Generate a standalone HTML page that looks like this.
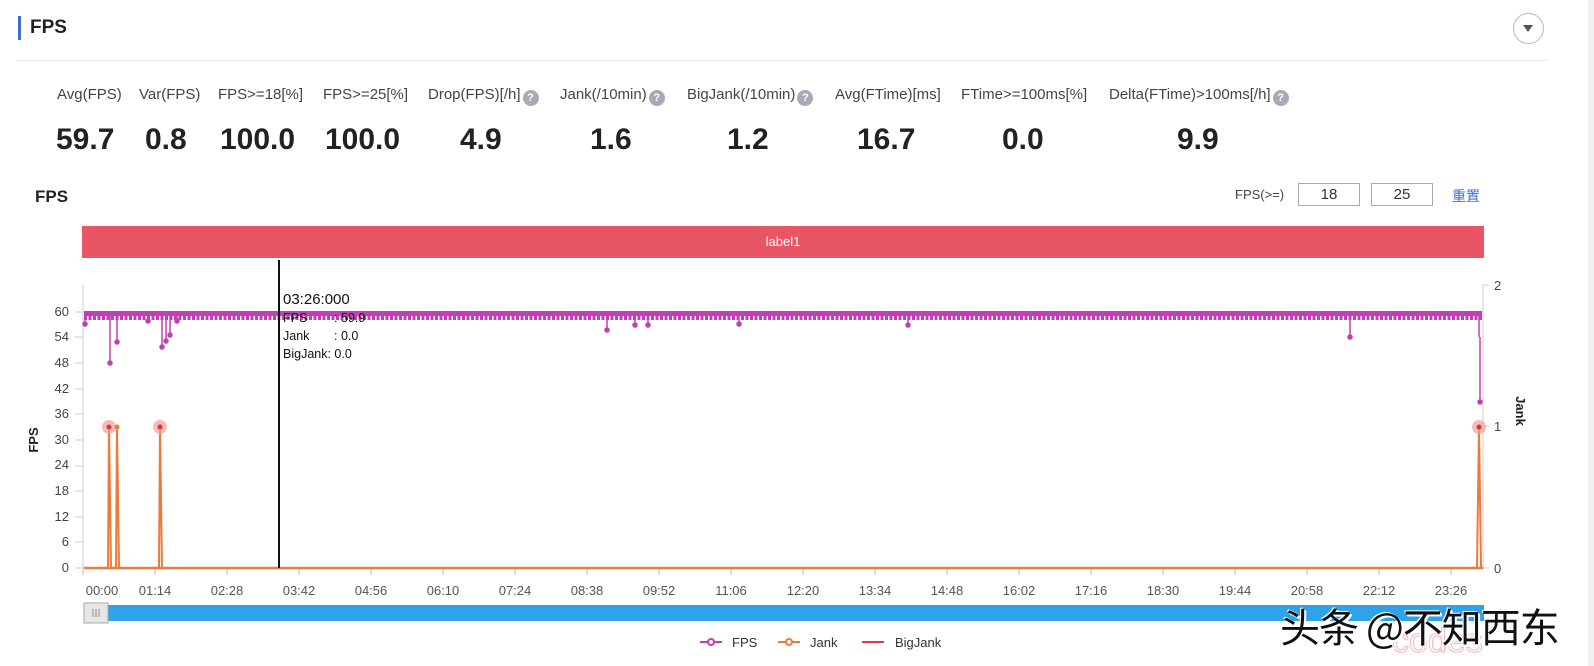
<!DOCTYPE html>
<html><head><meta charset="utf-8"><style>
body{margin:0;width:1594px;height:666px;background:#fff;font-family:"Liberation Sans","Noto Sans CJK SC",sans-serif;position:relative;overflow:hidden;color:#333}
.a{position:absolute;white-space:nowrap}
.lb{font-size:15px;color:#444;top:86px}
.v{font-size:30px;font-weight:bold;color:#222;top:123px}
.q{display:inline-block;width:16px;height:16px;border-radius:50%;background:#a9a9b8;color:#fff;font-size:11px;text-align:center;line-height:16px;font-weight:bold;vertical-align:-2px;margin-left:2px}
</style></head><body>
<div class="a" style="left:18px;top:16px;width:3px;height:24px;background:#3b6fd4"></div>
<div class="a" style="left:30px;top:17px;font-size:19px;font-weight:bold;color:#222">FPS</div>
<div class="a" style="left:1513px;top:13px;width:31px;height:31px;border:1px solid #bbb;border-radius:50%;box-sizing:border-box"></div>
<div class="a" style="left:1523px;top:25px;width:0;height:0;border-left:5px solid transparent;border-right:5px solid transparent;border-top:7px solid #555"></div>
<div class="a" style="left:16px;top:60px;width:1532px;height:1px;background:#e8e8e8"></div>
<div class="a" style="left:1588px;top:0;width:6px;height:666px;background:#f0f0f3"></div>

<div class="a lb" style="left:57px">Avg(FPS)</div>
<div class="a lb" style="left:139px">Var(FPS)</div>
<div class="a lb" style="left:218px">FPS&gt;=18[%]</div>
<div class="a lb" style="left:323px">FPS&gt;=25[%]</div>
<div class="a lb" style="left:428px">Drop(FPS)[/h]<span class="q">?</span></div>
<div class="a lb" style="left:560px">Jank(/10min)<span class="q">?</span></div>
<div class="a lb" style="left:687px">BigJank(/10min)<span class="q">?</span></div>
<div class="a lb" style="left:835px">Avg(FTime)[ms]</div>
<div class="a lb" style="left:961px">FTime&gt;=100ms[%]</div>
<div class="a lb" style="left:1109px">Delta(FTime)&gt;100ms[/h]<span class="q">?</span></div>

<div class="a v" style="left:56px">59.7</div>
<div class="a v" style="left:145px">0.8</div>
<div class="a v" style="left:220px">100.0</div>
<div class="a v" style="left:325px">100.0</div>
<div class="a v" style="left:460px">4.9</div>
<div class="a v" style="left:590px">1.6</div>
<div class="a v" style="left:727px">1.2</div>
<div class="a v" style="left:857px">16.7</div>
<div class="a v" style="left:1002px">0.0</div>
<div class="a v" style="left:1177px">9.9</div>

<div class="a" style="left:35px;top:187px;font-size:17px;font-weight:bold;color:#222">FPS</div>
<div class="a" style="left:1235px;top:187px;font-size:13px;color:#444">FPS(&gt;=)</div>
<div class="a" style="left:1298px;top:183px;width:62px;height:23px;border:1px solid #aaa;box-sizing:border-box;text-align:center;font-size:15px;line-height:21px">18</div>
<div class="a" style="left:1371px;top:183px;width:62px;height:23px;border:1px solid #aaa;box-sizing:border-box;text-align:center;font-size:15px;line-height:21px">25</div>
<div class="a" style="left:1452px;top:186px;font-size:14px;color:#3b6fd4">重置</div>

<div class="a" style="left:82px;top:226px;width:1402px;height:32px;background:#e85565;color:#fff;font-size:13px;text-align:center;line-height:32px">label1</div>

<svg class="a" style="left:0;top:0" width="1594" height="666" font-family="Liberation Sans, sans-serif">
<g stroke="#ccc" stroke-width="1">
<line x1="83" y1="285" x2="83" y2="569"/><line x1="1483" y1="285" x2="1483" y2="569"/>
<line x1="1483" y1="285" x2="1489" y2="285"/><line x1="1483" y1="426" x2="1489" y2="426"/><line x1="1483" y1="568" x2="1489" y2="568"/>
</g>
<g font-size="13" fill="#444" text-anchor="end">
<text x="69" y="316">60</text><text x="69" y="341">54</text><text x="69" y="367">48</text><text x="69" y="393">42</text><text x="69" y="418">36</text><text x="69" y="444">30</text><text x="69" y="469">24</text><text x="69" y="495">18</text><text x="69" y="521">12</text><text x="69" y="546">6</text><text x="69" y="572">0</text>
</g>
<g stroke="#ccc"><line x1="75" y1="312" x2="83" y2="312"/><line x1="75" y1="337" x2="83" y2="337"/><line x1="75" y1="363" x2="83" y2="363"/><line x1="75" y1="389" x2="83" y2="389"/><line x1="75" y1="414" x2="83" y2="414"/><line x1="75" y1="440" x2="83" y2="440"/><line x1="75" y1="466" x2="83" y2="466"/><line x1="75" y1="491" x2="83" y2="491"/><line x1="75" y1="517" x2="83" y2="517"/><line x1="75" y1="542" x2="83" y2="542"/><line x1="75" y1="568" x2="83" y2="568"/></g>
<g font-size="13" fill="#444"><text x="1494" y="290">2</text><text x="1494" y="431">1</text><text x="1494" y="573">0</text></g>
<text x="38" y="440" font-size="13" font-weight="bold" fill="#222" transform="rotate(-90 38 440)" text-anchor="middle">FPS</text>
<text x="1516" y="411" font-size="13" font-weight="bold" fill="#222" transform="rotate(90 1516 411)" text-anchor="middle">Jank</text>
<rect x="84" y="311" width="1398" height="5" fill="#c23fb5"/>
<line x1="84" y1="318" x2="1482" y2="318" stroke="#c23fb5" stroke-width="4" stroke-dasharray="3 1.5"/>
<g stroke="#c23fb5" stroke-width="1.5" fill="#c23fb5">
<line x1="85" y1="313" x2="85" y2="324"/><circle cx="85" cy="324" r="2"/>
<line x1="110" y1="313" x2="110" y2="363"/><circle cx="110" cy="363" r="2"/>
<line x1="117" y1="313" x2="117" y2="342"/><circle cx="117" cy="342" r="2"/>
<line x1="148" y1="313" x2="148" y2="321"/><circle cx="148" cy="321" r="2"/>
<line x1="162" y1="313" x2="162" y2="347"/><circle cx="162" cy="347" r="2"/>
<line x1="166" y1="313" x2="166" y2="341"/><circle cx="166" cy="341" r="2"/>
<line x1="170" y1="313" x2="170" y2="335"/><circle cx="170" cy="335" r="2"/>
<line x1="177" y1="313" x2="177" y2="321"/><circle cx="177" cy="321" r="2"/>
<line x1="607" y1="313" x2="607" y2="330"/><circle cx="607" cy="330" r="2"/>
<line x1="635" y1="313" x2="635" y2="325"/><circle cx="635" cy="325" r="2"/>
<line x1="648" y1="313" x2="648" y2="325"/><circle cx="648" cy="325" r="2"/>
<line x1="739" y1="313" x2="739" y2="324"/><circle cx="739" cy="324" r="2"/>
<line x1="908" y1="313" x2="908" y2="325"/><circle cx="908" cy="325" r="2"/>
<line x1="1350" y1="313" x2="1350" y2="337"/><circle cx="1350" cy="337" r="2"/>
<line x1="1479" y1="313" x2="1479" y2="337"/>
<line x1="1480" y1="337" x2="1480" y2="402"/><circle cx="1480" cy="402" r="2"/>
</g>
<line x1="84" y1="568" x2="1483" y2="568" stroke="#ec7a3d" stroke-width="2.5"/>
<g stroke="#ec7a3d" stroke-width="2" fill="none">
<polyline points="108,568 109,427 111,568"/>
<polyline points="116,568 117,427 119,568"/>
<polyline points="159,568 160,427 162,568"/>
<polyline points="1477,568 1479,427 1481,568"/>
</g>
<g fill="#f2a0a0" opacity="0.7"><circle cx="109" cy="427" r="7"/><circle cx="160" cy="427" r="7"/><circle cx="1479" cy="427" r="7"/></g>
<g fill="#d33"><circle cx="109" cy="427" r="2.5"/><circle cx="160" cy="427" r="2.5"/><circle cx="1479" cy="427" r="2.5"/></g>
<circle cx="117" cy="427" r="2.5" fill="#ec7a3d"/>
<line x1="279" y1="260" x2="279" y2="568" stroke="#111" stroke-width="2"/>
<text x="283" y="304" font-size="15" fill="#111">03:26:000</text>
<g font-size="12.5" fill="#111"><text x="283" y="322">FPS</text><text x="334" y="322">: 59.9</text><text x="283" y="340">Jank</text><text x="334" y="340">: 0.0</text><text x="283" y="358">BigJank: 0.0</text></g>
<g stroke="#bbb">
<line x1="83" y1="569" x2="83" y2="575"/><line x1="155" y1="569" x2="155" y2="575"/><line x1="227" y1="569" x2="227" y2="575"/><line x1="299" y1="569" x2="299" y2="575"/><line x1="371" y1="569" x2="371" y2="575"/><line x1="443" y1="569" x2="443" y2="575"/><line x1="515" y1="569" x2="515" y2="575"/><line x1="587" y1="569" x2="587" y2="575"/><line x1="659" y1="569" x2="659" y2="575"/><line x1="731" y1="569" x2="731" y2="575"/><line x1="803" y1="569" x2="803" y2="575"/><line x1="875" y1="569" x2="875" y2="575"/><line x1="947" y1="569" x2="947" y2="575"/><line x1="1019" y1="569" x2="1019" y2="575"/><line x1="1091" y1="569" x2="1091" y2="575"/><line x1="1163" y1="569" x2="1163" y2="575"/><line x1="1235" y1="569" x2="1235" y2="575"/><line x1="1307" y1="569" x2="1307" y2="575"/><line x1="1379" y1="569" x2="1379" y2="575"/><line x1="1451" y1="569" x2="1451" y2="575"/>
</g>
<g font-size="13" fill="#555" text-anchor="middle">
<text x="102" y="595">00:00</text><text x="155" y="595">01:14</text><text x="227" y="595">02:28</text><text x="299" y="595">03:42</text><text x="371" y="595">04:56</text><text x="443" y="595">06:10</text><text x="515" y="595">07:24</text><text x="587" y="595">08:38</text><text x="659" y="595">09:52</text><text x="731" y="595">11:06</text><text x="803" y="595">12:20</text><text x="875" y="595">13:34</text><text x="947" y="595">14:48</text><text x="1019" y="595">16:02</text><text x="1091" y="595">17:16</text><text x="1163" y="595">18:30</text><text x="1235" y="595">19:44</text><text x="1307" y="595">20:58</text><text x="1379" y="595">22:12</text><text x="1451" y="595">23:26</text>
</g>
<rect x="104" y="605" width="1380" height="16" fill="#2ea3ea"/>
<rect x="84" y="603" width="24" height="20" fill="#e6e6e6" stroke="#aaa"/>
<g stroke="#888"><line x1="93" y1="609" x2="93" y2="617"/><line x1="96" y1="609" x2="96" y2="617"/><line x1="99" y1="609" x2="99" y2="617"/></g>
<g stroke-width="2" fill="#fff">
<line x1="700" y1="642" x2="722" y2="642" stroke="#c23fb5"/><circle cx="711" cy="642" r="3" stroke="#c23fb5"/>
<line x1="778" y1="642" x2="800" y2="642" stroke="#ec7a3d"/><circle cx="789" cy="642" r="3" stroke="#ec7a3d"/>
<line x1="862" y1="642" x2="884" y2="642" stroke="#e03c3c"/>
</g>
<g font-size="13" fill="#333"><text x="732" y="647">FPS</text><text x="810" y="647">Jank</text><text x="895" y="647">BigJank</text></g>
<text x="1392" y="652" font-size="34" fill="none" stroke="#f4b8b8" stroke-width="1">codes</text>
</svg>
<div class="a" style="left:1280px;top:596px;font-size:40px;letter-spacing:-1px;color:#111;font-family:'Noto Sans CJK SC',sans-serif;text-shadow:1px 1px 0 #fff,-1px -1px 0 #fff,2px 2px 0 #fff">头条 @不知西东</div>
</body></html>
